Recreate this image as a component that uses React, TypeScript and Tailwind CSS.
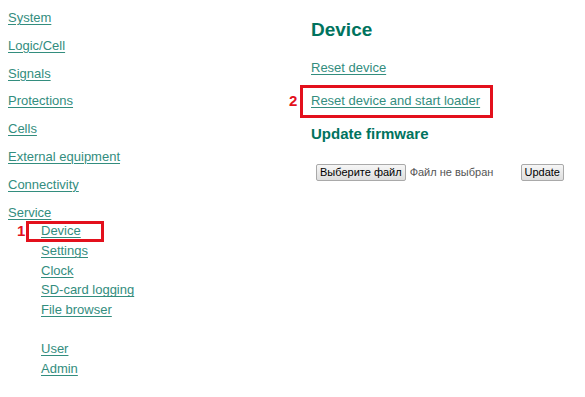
import React from 'react';

const mainLinks = ['System', 'Logic/Cell', 'Signals', 'Protections', 'Cells', 'External equipment', 'Connectivity'];
const serviceLinks = ['Device', 'Settings', 'Clock', 'SD-card logging', 'File browser'];
const accessLinks = ['User', 'Admin'];

const linkCls = 'text-[#338d7e] underline underline-offset-[2px] decoration-1';
const btnCls =
  'h-[17px] px-[3px] border border-[#a9a9a9] rounded-[2px] bg-gradient-to-b from-[#f6f6f6] to-[#dedede] text-black leading-none';

export default function App() {
  return (
    <div className="w-[585px] h-[397px] bg-white flex font-['Liberation_Sans',Arial,sans-serif] text-[13px] overflow-hidden">
      {/* Menu */}
      <nav className="w-[311px] shrink-0 pl-2 pt-[4px] flex flex-col">
        {mainLinks.map((l) => (
          <div key={l} className="leading-[27.8px]">
            <a href="#" className={linkCls}>{l}</a>
          </div>
        ))}
        <div className="leading-[27.4px]">
          <a href="#" className={linkCls}>Service</a>
        </div>
        <div className="pl-[33px] mt-[-4.5px] flex flex-col">
          {serviceLinks.map((l, i) => (
            <div key={l} className="leading-[19.66px] relative">
              {i === 0 && (
                <>
                  <span className="absolute left-[-24px] top-0 leading-[19.66px] text-[15px] font-bold text-[#e3101c]">1</span>
                  <span className="absolute left-[-15px] top-0 w-[78px] h-[21px] border-[3px] border-[#e3101c]" />
                </>
              )}
              <a href="#" className={linkCls}>{l}</a>
            </div>
          ))}
          <div className="h-[19.66px]" />
          {accessLinks.map((l) => (
            <div key={l} className="leading-[19.66px]">
              <a href="#" className={linkCls}>{l}</a>
            </div>
          ))}
        </div>
      </nav>

      {/* Content */}
      <main className="flex flex-col pt-[19px]">
        <h1 className="text-[19px] font-bold text-[#00735e] leading-[22px]">Device</h1>
        <div className="mt-[19px] leading-[16px]">
          <a href="#" className={linkCls}>Reset device</a>
        </div>
        <div className="mt-[17px] leading-[16px] relative">
          <span className="absolute left-[-22px] top-0 text-[15px] font-bold text-[#e3101c]">2</span>
          <span className="absolute left-[-11px] top-[-8px] w-[193px] h-[33px] border-[3px] border-[#e3101c]" />
          <a href="#" className={linkCls}>Reset device and start loader</a>
        </div>
        <h2 className="mt-[16px] text-[15px] font-bold text-[#00735e] leading-[18px]">Update firmware</h2>
        <div className="mt-[21px] ml-[5px] flex items-center text-[11px] w-[248px]">
          <button className={btnCls}>Выберите файл</button>
          <span className="ml-[4px] text-[#555]">Файл не выбран</span>
          <button className={`ml-auto ${btnCls}`}>Update</button>
        </div>
      </main>
    </div>
  );
}
